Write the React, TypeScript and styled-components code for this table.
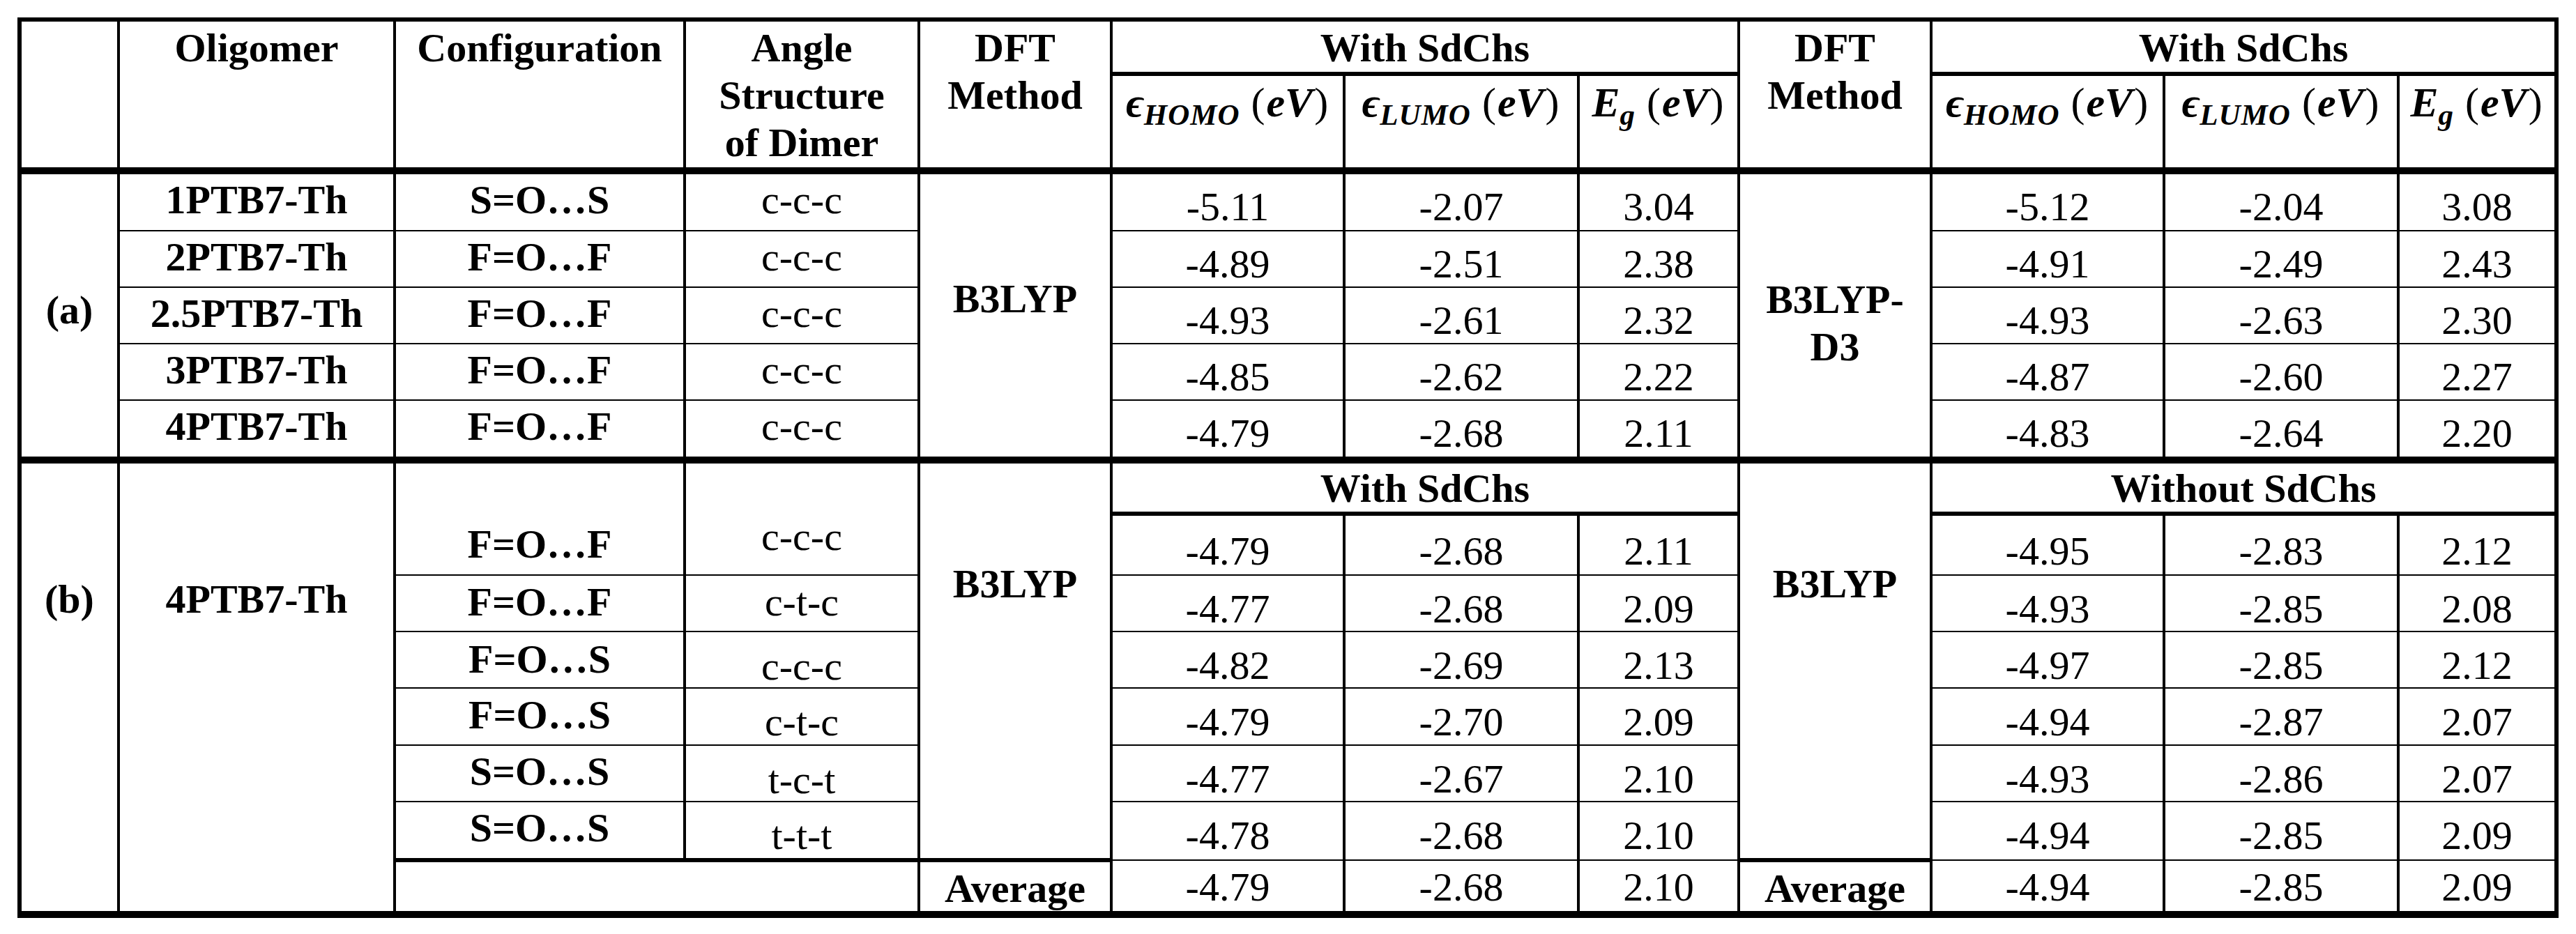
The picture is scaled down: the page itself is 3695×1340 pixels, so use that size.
import React from 'react'
import styled, { createGlobalStyle } from 'styled-components'

const GlobalStyle = createGlobalStyle`
  html, body {
    margin: 0;
    padding: 0;
    background: #fff;
  }
  body {
    font-family: 'Liberation Serif', 'Times New Roman', 'DejaVu Serif', serif;
    color: #000;
  }
`

type Triple = [string, string, string]

const colWidths = [142, 396, 416, 336, 276, 334, 336, 230, 276, 334, 336, 227]

const sectionA: {
  oligomer: string
  config: string
  angle: string
  h: number
  b3lyp: Triple
  d3: Triple
}[] = [
  { oligomer: '1PTB7-Th', config: 'S=O…S', angle: 'c-c-c', h: 86, b3lyp: ['-5.11', '-2.07', '3.04'], d3: ['-5.12', '-2.04', '3.08'] },
  { oligomer: '2PTB7-Th', config: 'F=O…F', angle: 'c-c-c', h: 81, b3lyp: ['-4.89', '-2.51', '2.38'], d3: ['-4.91', '-2.49', '2.43'] },
  { oligomer: '2.5PTB7-Th', config: 'F=O…F', angle: 'c-c-c', h: 81, b3lyp: ['-4.93', '-2.61', '2.32'], d3: ['-4.93', '-2.63', '2.30'] },
  { oligomer: '3PTB7-Th', config: 'F=O…F', angle: 'c-c-c', h: 81, b3lyp: ['-4.85', '-2.62', '2.22'], d3: ['-4.87', '-2.60', '2.27'] },
  { oligomer: '4PTB7-Th', config: 'F=O…F', angle: 'c-c-c', h: 86, b3lyp: ['-4.79', '-2.68', '2.11'], d3: ['-4.83', '-2.64', '2.20'] },
]

const sectionB: {
  config: string
  angle: string
  h: number
  configPt: number
  anglePt: number
  numPt: number
  withSd: Triple
  withoutSd: Triple
}[] = [
  { config: 'F=O…F', angle: 'c-c-c', h: 88, configPt: 87, anglePt: 76, numPt: 22, withSd: ['-4.79', '-2.68', '2.11'], withoutSd: ['-4.95', '-2.83', '2.12'] },
  { config: 'F=O…F', angle: 'c-t-c', h: 81, configPt: 9, anglePt: 9, numPt: 19, withSd: ['-4.77', '-2.68', '2.09'], withoutSd: ['-4.93', '-2.85', '2.08'] },
  { config: 'F=O…S', angle: 'c-c-c', h: 81, configPt: 10, anglePt: 20, numPt: 19, withSd: ['-4.82', '-2.69', '2.13'], withoutSd: ['-4.97', '-2.85', '2.12'] },
  { config: 'F=O…S', angle: 'c-t-c', h: 82, configPt: 9, anglePt: 19, numPt: 19, withSd: ['-4.79', '-2.70', '2.09'], withoutSd: ['-4.94', '-2.87', '2.07'] },
  { config: 'S=O…S', angle: 't-c-t', h: 81, configPt: 8, anglePt: 20, numPt: 19, withSd: ['-4.77', '-2.67', '2.10'], withoutSd: ['-4.93', '-2.86', '2.07'] },
  { config: 'S=O…S', angle: 't-t-t', h: 84, configPt: 8, anglePt: 19, numPt: 19, withSd: ['-4.78', '-2.68', '2.10'], withoutSd: ['-4.94', '-2.85', '2.09'] },
]

const averages: { withSd: Triple; withoutSd: Triple } = {
  withSd: ['-4.79', '-2.68', '2.10'],
  withoutSd: ['-4.94', '-2.85', '2.09'],
}

function EnergyHeader({ symbol, sub }: { symbol: string; sub: string }) {
  return (
    <MathLine>
      <MathVar>{symbol}</MathVar>
      <MathSub>{sub}</MathSub>
      <Paren>(</Paren>
      <MathVar>eV</MathVar>
      <Paren>)</Paren>
    </MathLine>
  )
}

function Values({ values, pt }: { values: Triple; pt: number }) {
  return (
    <>
      {values.map((v, i) => (
        <Cell key={i} $pt={pt}>
          {v}
        </Cell>
      ))}
    </>
  )
}

export default function App() {
  return (
    <Page>
      <GlobalStyle />
      <Table>
        <colgroup>
          {colWidths.map((w, i) => (
            <Col key={i} $w={w} />
          ))}
        </colgroup>
        <Head>
          <Row $h={76}>
            <HeadCell rowSpan={2} />
            <HeadCell rowSpan={2}>Oligomer</HeadCell>
            <HeadCell rowSpan={2}>Configuration</HeadCell>
            <HeadCell rowSpan={2}>
              Angle
              <br />
              Structure
              <br />
              of Dimer
            </HeadCell>
            <HeadCell rowSpan={2}>
              DFT
              <br />
              Method
            </HeadCell>
            <HeadCell colSpan={3} $bb={6}>
              With SdChs
            </HeadCell>
            <HeadCell rowSpan={2}>
              DFT
              <br />
              Method
            </HeadCell>
            <HeadCell colSpan={3} $bb={6}>
              With SdChs
            </HeadCell>
          </Row>
          <Row $h={139}>
            <HeadCell $bt={6}>
              <EnergyHeader symbol="ϵ" sub="HOMO" />
            </HeadCell>
            <HeadCell $bt={6}>
              <EnergyHeader symbol="ϵ" sub="LUMO" />
            </HeadCell>
            <HeadCell $bt={6}>
              <EnergyHeader symbol="E" sub="g" />
            </HeadCell>
            <HeadCell $bt={6}>
              <EnergyHeader symbol="ϵ" sub="HOMO" />
            </HeadCell>
            <HeadCell $bt={6}>
              <EnergyHeader symbol="ϵ" sub="LUMO" />
            </HeadCell>
            <HeadCell $bt={6}>
              <EnergyHeader symbol="E" sub="g" />
            </HeadCell>
          </Row>
        </Head>

        <Section>
          {sectionA.map((r, i) => (
            <Row key={r.oligomer} $h={r.h}>
              {i === 0 && (
                <Cell rowSpan={5} $bold $pt={166}>
                  (a)
                </Cell>
              )}
              <Cell $bold $pt={8}>
                {r.oligomer}
              </Cell>
              <Cell $bold $pt={8}>
                {r.config}
              </Cell>
              <Cell $pt={8}>{r.angle}</Cell>
              {i === 0 && (
                <Cell rowSpan={5} $bold $pt={150}>
                  B3LYP
                </Cell>
              )}
              <Values values={r.b3lyp} pt={18} />
              {i === 0 && (
                <Cell rowSpan={5} $bold $pt={146} $lh={68}>
                  B3LYP-
                  <br />
                  D3
                </Cell>
              )}
              <Values values={r.d3} pt={18} />
            </Row>
          ))}
        </Section>

        <Section>
          <Row $h={77}>
            <Cell rowSpan={8} $bold $pt={166}>
              (b)
            </Cell>
            <Cell rowSpan={8} $bold $pt={166}>
              4PTB7-Th
            </Cell>
            <Cell rowSpan={2} $bold $pt={sectionB[0].configPt}>
              {sectionB[0].config}
            </Cell>
            <Cell rowSpan={2} $pt={sectionB[0].anglePt}>
              {sectionB[0].angle}
            </Cell>
            <Cell rowSpan={7} $bold $pt={144}>
              B3LYP
            </Cell>
            <Cell colSpan={3} $bold $pt={7} $bb={6}>
              With SdChs
            </Cell>
            <Cell rowSpan={7} $bold $pt={144}>
              B3LYP
            </Cell>
            <Cell colSpan={3} $bold $pt={7} $bb={6}>
              Without SdChs
            </Cell>
          </Row>
          {sectionB.map((r, i) => (
            <Row key={i} $h={r.h}>
              {i > 0 && (
                <>
                  <Cell $bold $pt={r.configPt}>
                    {r.config}
                  </Cell>
                  <Cell $pt={r.anglePt}>{r.angle}</Cell>
                </>
              )}
              <Values values={r.withSd} pt={r.numPt} />
              <Values values={r.withoutSd} pt={r.numPt} />
            </Row>
          ))}
          <Row $h={78}>
            <Cell colSpan={2} $bt={6} />
            <Cell $bold $pt={9} $bt={6}>
              Average
            </Cell>
            <Values values={averages.withSd} pt={9} />
            <Cell $bold $pt={9} $bt={6}>
              Average
            </Cell>
            <Values values={averages.withoutSd} pt={9} />
          </Row>
        </Section>
      </Table>
    </Page>
  )
}

const Page = styled.div`
  padding: 25px;
  width: 3695px;
  box-sizing: border-box;
`

const Table = styled.table`
  border-collapse: collapse;
  table-layout: fixed;
  width: 3645px;
  border: 6px solid #000;
  border-bottom-width: 10px;
  font-size: 58px;
  line-height: 58px;
`

const Col = styled.col<{ $w: number }>`
  width: ${(p) => p.$w}px;
`

const Head = styled.thead`
  border-bottom: 10px solid #000;
`

const Section = styled.tbody`
  border-bottom: 10px solid #000;
`

const Row = styled.tr<{ $h: number }>`
  height: ${(p) => p.$h}px;
`

const HeadCell = styled.th<{ $bb?: number; $bt?: number }>`
  border-left: 4px solid #000;
  border-right: 4px solid #000;
  border-top: ${(p) => p.$bt ?? 2}px solid #000;
  border-bottom: ${(p) => p.$bb ?? 2}px solid #000;
  padding: 4px 0 0;
  vertical-align: top;
  text-align: center;
  font-weight: 700;
  line-height: 68px;
  white-space: nowrap;
`

const Cell = styled.td<{ $pt?: number; $bold?: boolean; $bb?: number; $bt?: number; $lh?: number }>`
  border-left: 4px solid #000;
  border-right: 4px solid #000;
  border-top: ${(p) => p.$bt ?? 2}px solid #000;
  border-bottom: ${(p) => p.$bb ?? 2}px solid #000;
  padding: ${(p) => p.$pt ?? 0}px 0 0;
  vertical-align: top;
  text-align: center;
  font-weight: ${(p) => (p.$bold ? 700 : 400)};
  line-height: ${(p) => p.$lh ?? 58}px;
  white-space: nowrap;
`

const MathLine = styled.span`
  display: inline-block;
  font-size: 60px;
  line-height: 68px;
  font-weight: 700;
  white-space: nowrap;
`

const MathVar = styled.span`
  font-style: italic;
  font-weight: 700;
`

const MathSub = styled.span`
  font-style: italic;
  font-weight: 700;
  font-size: 43px;
  line-height: 0;
  position: relative;
  top: 12px;
  margin-right: 14px;
  letter-spacing: 1px;
`

const Paren = styled.span`
  font-weight: 400;
  font-style: normal;
  margin: 0 2px;
`
